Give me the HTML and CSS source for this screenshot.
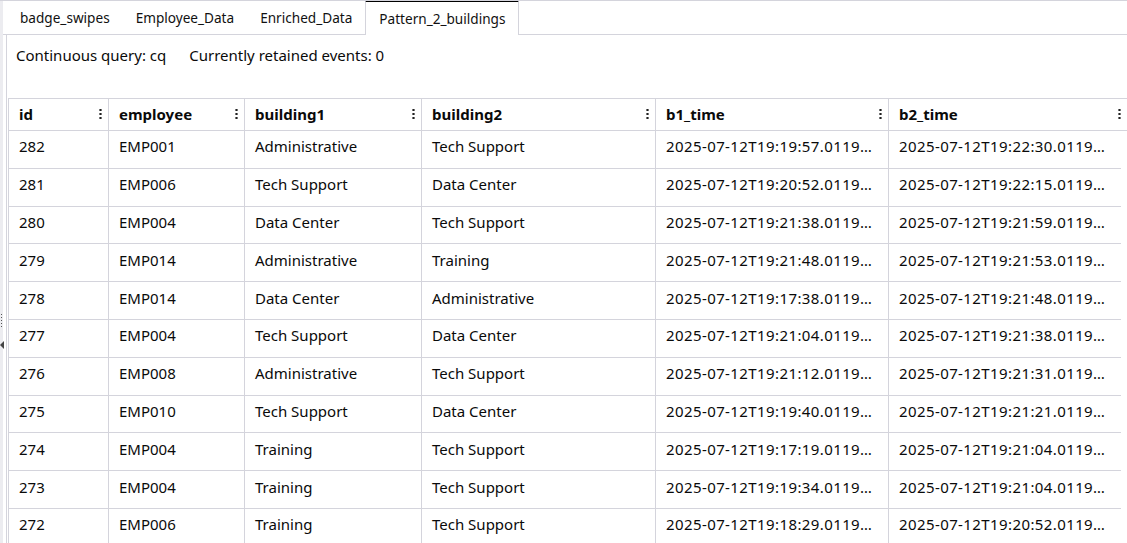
FILE: index.html
```html
<!DOCTYPE html>
<html lang="en">
<head>
<meta charset="utf-8">
<title>Pattern_2_buildings</title>
<link rel="stylesheet" href="styles.css">
</head>
<body>
<div class="app">
  <div class="splitter">
    <div class="grip"></div>
    <div class="arrow"></div>
  </div>
  <div class="main">
    <div class="tabs">
      <div class="tab">badge_swipes</div>
      <div class="tab">Employee_Data</div>
      <div class="tab">Enriched_Data</div>
      <div class="tab active">Pattern_2_buildings</div>
    </div>
    <div class="panel">
      <div class="info">
        <span>Continuous query: cq</span>
        <span>Currently retained events: 0</span>
      </div>
      <div class="grid">
        <div class="head">
          <div class="hc c1"><span>id</span><i class="kebab"></i></div>
          <div class="hc c2"><span>employee</span><i class="kebab"></i></div>
          <div class="hc c3"><span>building1</span><i class="kebab"></i></div>
          <div class="hc c4"><span>building2</span><i class="kebab"></i></div>
          <div class="hc c5"><span>b1_time</span><i class="kebab"></i></div>
          <div class="hc c6"><span>b2_time</span><i class="kebab"></i></div>
        </div>
        <div class="body">
          <div class="row"><div class="c c1">282</div><div class="c c2">EMP001</div><div class="c c3">Administrative</div><div class="c c4">Tech Support</div><div class="c c5">2025-07-12T19:19:57.0119…</div><div class="c c6">2025-07-12T19:22:30.0119…</div></div>
          <div class="row"><div class="c c1">281</div><div class="c c2">EMP006</div><div class="c c3">Tech Support</div><div class="c c4">Data Center</div><div class="c c5">2025-07-12T19:20:52.0119…</div><div class="c c6">2025-07-12T19:22:15.0119…</div></div>
          <div class="row"><div class="c c1">280</div><div class="c c2">EMP004</div><div class="c c3">Data Center</div><div class="c c4">Tech Support</div><div class="c c5">2025-07-12T19:21:38.0119…</div><div class="c c6">2025-07-12T19:21:59.0119…</div></div>
          <div class="row"><div class="c c1">279</div><div class="c c2">EMP014</div><div class="c c3">Administrative</div><div class="c c4">Training</div><div class="c c5">2025-07-12T19:21:48.0119…</div><div class="c c6">2025-07-12T19:21:53.0119…</div></div>
          <div class="row"><div class="c c1">278</div><div class="c c2">EMP014</div><div class="c c3">Data Center</div><div class="c c4">Administrative</div><div class="c c5">2025-07-12T19:17:38.0119…</div><div class="c c6">2025-07-12T19:21:48.0119…</div></div>
          <div class="row"><div class="c c1">277</div><div class="c c2">EMP004</div><div class="c c3">Tech Support</div><div class="c c4">Data Center</div><div class="c c5">2025-07-12T19:21:04.0119…</div><div class="c c6">2025-07-12T19:21:38.0119…</div></div>
          <div class="row"><div class="c c1">276</div><div class="c c2">EMP008</div><div class="c c3">Administrative</div><div class="c c4">Tech Support</div><div class="c c5">2025-07-12T19:21:12.0119…</div><div class="c c6">2025-07-12T19:21:31.0119…</div></div>
          <div class="row"><div class="c c1">275</div><div class="c c2">EMP010</div><div class="c c3">Tech Support</div><div class="c c4">Data Center</div><div class="c c5">2025-07-12T19:19:40.0119…</div><div class="c c6">2025-07-12T19:21:21.0119…</div></div>
          <div class="row"><div class="c c1">274</div><div class="c c2">EMP004</div><div class="c c3">Training</div><div class="c c4">Tech Support</div><div class="c c5">2025-07-12T19:17:19.0119…</div><div class="c c6">2025-07-12T19:21:04.0119…</div></div>
          <div class="row"><div class="c c1">273</div><div class="c c2">EMP004</div><div class="c c3">Training</div><div class="c c4">Tech Support</div><div class="c c5">2025-07-12T19:19:34.0119…</div><div class="c c6">2025-07-12T19:21:04.0119…</div></div>
          <div class="row"><div class="c c1">272</div><div class="c c2">EMP006</div><div class="c c3">Training</div><div class="c c4">Tech Support</div><div class="c c5">2025-07-12T19:18:29.0119…</div><div class="c c6">2025-07-12T19:20:52.0119…</div></div>
        </div>
      </div>
    </div>
  </div>
</div>
</body>
</html>
```
FILE: styles.css
```css
html, body {
  margin: 0;
  padding: 0;
  background: #fff;
  overflow: hidden;
}
body {
  font-family: "Noto Sans", "Open Sans", sans-serif;
  font-size: 15px;
  color: #0a0a0a;
}
.app {
  display: flex;
  height: 543px;
  border-top: 1px solid #d4d4dc;
  box-sizing: border-box;
  overflow: hidden;
}
.splitter {
  width: 3px;
  background: #ececf0;
  display: flex;
  flex-direction: column;
  align-items: flex-start;
  flex: none;
}
.grip {
  margin-top: 312px;
  width: 3px;
  height: 15px;
  background-image: radial-gradient(circle, #555 0.8px, transparent 1px);
  background-size: 3px 3px;
}
.arrow {
  margin-top: 13px;
  width: 0;
  height: 0;
  border-top: 4px solid transparent;
  border-bottom: 4px solid transparent;
  border-right: 4px solid #444;
}
.main {
  flex: 1;
  display: flex;
  flex-direction: column;
  min-width: 0;
  overflow: hidden;
}
.tabs {
  display: flex;
  height: 33px;
  padding-left: 4px;
  border-bottom: 1px solid #d4d4dc;
  flex: none;
}
.tab {
  padding: 0 13px;
  line-height: 33px;
  height: 33px;
  font-size: 13.6px;
  color: #111;
  white-space: nowrap;
}
.tab.active {
  padding: 0 13px;
  background: #fff;
  border-top: 2px solid #000;
  border-left: 1px solid #d4d4dc;
  border-right: 1px solid #d4d4dc;
  margin-top: -1px;
  margin-bottom: -1px;
  box-sizing: border-box;
  height: 35px;
  line-height: 33px;
}
.panel {
  flex: 1;
  margin-left: 3px;
  border-left: 1px solid #d4d4dc;
  display: flex;
  flex-direction: column;
  min-height: 0;
}
.info {
  flex: none;
  display: flex;
  gap: 23px;
  padding: 10px 0 0 9px;
  height: 63px;
  box-sizing: border-box;
  line-height: 20px;
}
.grid {
  flex: none;
  margin-left: 1px;
  border-left: 1px solid #d4d4dc;
  border-top: 1px solid #d4d4dc;
}
.head {
  display: flex;
  height: 31px;
  border-bottom: 1px solid #d4d4dc;
}
.hc {
  display: flex;
  align-items: center;
  justify-content: space-between;
  padding: 0 6px 2px 10px;
  font-weight: 700;
  border-right: 1px solid #d4d4dc;
  box-sizing: border-box;
}
.hc.c6 { border-right: none; flex: 1; }
.kebab {
  width: 3px;
  height: 11px;
  background-image: radial-gradient(circle, #222 1px, transparent 1.3px);
  background-size: 3px 4px;
  background-position: 0 0;
}
.c1 { width: 100px; }
.c2 { width: 136px; }
.c3 { width: 177px; }
.c4 { width: 234px; }
.c5 { width: 233px; }
.c6 { width: 232px; }
.body {
  width: 1112px;
}
.row {
  display: flex;
  height: 37.8px;
  border-bottom: 1px solid #d4d4dc;
  box-sizing: border-box;
}
.c {
  padding: 0 10px 6px;
  display: flex;
  align-items: center;
  border-right: 1px solid #d4d4dc;
  box-sizing: border-box;
  white-space: nowrap;
  overflow: hidden;
}
.c.c5, .c.c6 { letter-spacing: 0.4px; }
.c.c6 { border-right: none; }
```
